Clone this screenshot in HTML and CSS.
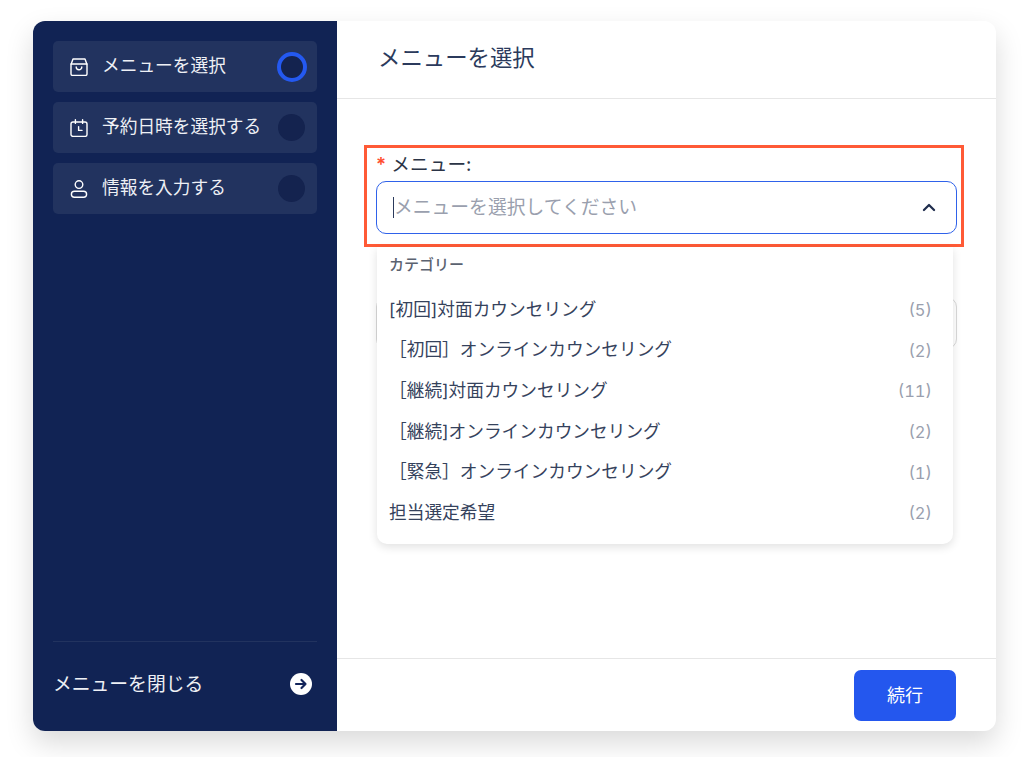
FILE: index.html
```html
<!DOCTYPE html>
<html lang="ja">
<head>
    <meta charset="UTF-8">
    <meta name="viewport" content="width=device-width, initial-scale=1.0">
    <title>メニューを選択</title>
    <link rel="stylesheet" href="styles.css">
</head>
<body>
    <div class="card">
        <aside class="sidebar">
            <div class="steps">
                <div class="step">
                    <svg class="step-icon" viewBox="0 0 18 18" fill="none" stroke="currentColor" stroke-width="1.4" stroke-linejoin="round" stroke-linecap="round">
                        <path d="M3 1h12l2 5.500v9.500a1.400 1.400 0 0 1-1.400 1.400H2.400A1.400 1.400 0 0 1 1 16V6.500z"/>
                        <path d="M1 6h16"/>
                        <path d="M6.200 9c0 3.600 5.600 3.600 5.600 0"/>
                    </svg>
                    <span class="step-label">メニューを選択</span>
                    <span class="step-dot active"></span>
                </div>
                <div class="step">
                    <svg class="step-icon" viewBox="0 0 18 18" fill="none" stroke="currentColor" stroke-width="1.4" stroke-linejoin="round" stroke-linecap="round">
                        <rect x="1" y="3" width="16" height="14.400" rx="2"/>
                        <path d="M5.400 .8v3.600M12.600 .8v3.600"/>
                        <path d="M8.600 7.600v3.800h3.400"/>
                    </svg>
                    <span class="step-label">予約日時を選択する</span>
                    <span class="step-dot"></span>
                </div>
                <div class="step">
                    <svg class="step-icon" viewBox="0 0 18 18" fill="none" stroke="currentColor" stroke-width="1.4" stroke-linejoin="round" stroke-linecap="round">
                        <circle cx="9" cy="4.600" r="3.800"/>
                        <path d="M4.400 11.200h9.200a3 3 0 0 1 0 6H4.400a3 3 0 0 1 0-6z"/>
                    </svg>
                    <span class="step-label">情報を入力する</span>
                    <span class="step-dot"></span>
                </div>
            </div>
            <div class="close-row">
                <span class="close-label">メニューを閉じる</span>
                <svg class="close-icon" viewBox="0 0 22 22">
                    <circle cx="11" cy="11" r="11" fill="#fff"/>
                    <path d="M6 11h9.500M11.500 7l4 4-4 4" fill="none" stroke="#12245a" stroke-width="2.200" stroke-linecap="round" stroke-linejoin="round"/>
                </svg>
            </div>
        </aside>

        <main class="main">
            <header class="main-header">メニューを選択</header>

            <div class="main-body">
                <div class="field-highlight">
                    <label class="field-label"><span class="required">*</span> メニュー:</label>
                    <div class="select open">
                        <span class="cursor"></span>
                        <span class="placeholder">メニューを選択してください</span>
                        <svg class="chevron" viewBox="0 0 12 8" fill="none" stroke="#1f2d4d" stroke-width="2" stroke-linecap="round" stroke-linejoin="round">
                            <path d="M1.500 6.200L6 1.800l4.500 4.400"/>
                        </svg>
                    </div>

                    <div class="dropdown">
                        <div class="dropdown-title">カテゴリー</div>
                        <div class="option"><span class="option-label">[初回]対面カウンセリング</span><span class="count">(5)</span></div>
                        <div class="option"><span class="option-label">［初回］オンラインカウンセリング</span><span class="count">(2)</span></div>
                        <div class="option"><span class="option-label">［継続]対面カウンセリング</span><span class="count">(11)</span></div>
                        <div class="option"><span class="option-label">［継続]オンラインカウンセリング</span><span class="count">(2)</span></div>
                        <div class="option"><span class="option-label">［緊急］オンラインカウンセリング</span><span class="count">(1)</span></div>
                        <div class="option"><span class="option-label">担当選定希望</span><span class="count">(2)</span></div>
                    </div>
                </div>

                <div class="select behind"></div>
            </div>

            <footer class="main-footer">
                <button class="next-btn">続行</button>
            </footer>
        </main>
    </div>
</body>
</html>
```

FILE: styles.css
```css
* {
    box-sizing: border-box;
}

html, body {
    height: 757px;
    overflow: hidden;
}

body {
    margin: 0;
    padding: 21px 28px 26px 33px;
    background: #fff;
    font-family: Inter, "Noto Sans CJK JP", sans-serif;
    color: #2b3a5c;
}

.card {
    display: flex;
    height: 710px;
    background: #fff;
    border-radius: 12px;
    box-shadow: 0 12px 28px rgba(0, 0, 0, 0.15);
}

/* Sidebar */
.sidebar {
    display: flex;
    flex-direction: column;
    width: 304px;
    padding: 20px 20px 0 20px;
    background: #112354;
    border-radius: 12px 0 0 12px;
    color: #fff;
}

.steps {
    display: flex;
    flex-direction: column;
    gap: 10px;
    flex: 1;
}

.step {
    display: flex;
    align-items: center;
    height: 51px;
    padding: 0 12px 0 17px;
    background: #22335f;
    border-radius: 5px;
}

.step-icon {
    width: 18px;
    height: 18px;
    flex-shrink: 0;
    color: #fff;
}

.step-label {
    flex: 1;
    margin-left: 14px;
    padding-bottom: 5px;
    font-size: 17.700px;
    color: #eef0f5;
}

.step-dot {
    width: 27px;
    height: 27px;
    border-radius: 50%;
    background: #14234f;
}

.step-dot.active {
    width: 30px;
    height: 30px;
    margin-right: -2px;
    border: 4.500px solid #2459f0;
}

.close-row {
    display: flex;
    align-items: center;
    justify-content: space-between;
    height: 90px;
    padding: 0 5px 5px 0;
    border-top: 1px solid #22335f;
    color: #eef0f5;
}

.close-label {
    padding-bottom: 4px;
    font-size: 18.800px;
}

.close-icon {
    width: 22px;
    height: 22px;
}

/* Main panel */
.main {
    display: flex;
    flex-direction: column;
    flex: 1;
    min-width: 0;
}

.main-header {
    display: flex;
    align-items: center;
    height: 78px;
    padding: 0 0 7px 41px;
    border-bottom: 1px solid #e6e6e6;
    font-size: 22.400px;
    color: #2b3a5c;
}

.main-body {
    flex: 1;
    padding: 46px 32px 0 27px;
}

.field-highlight {
    position: relative;
    height: 102px;
    padding: 4px 4px 0 9px;
    border: 3px solid #ff5a36;
}

.field-label {
    display: block;
    height: 29px;
    font-size: 18.700px;
    line-height: 26px;
    color: #2b3446;
}

.required {
    font-weight: 600;
    color: #ff4d2e;
}

.select {
    position: relative;
    display: flex;
    align-items: center;
    height: 53px;
    padding: 0 0 0 16px;
    background: #fff;
    border: 1px solid #d9d9d9;
    border-radius: 10px;
}

.select.open {
    border: 1.500px solid #2f62ea;
}

.select.behind {
    width: 581px;
    height: 52px;
    margin: 50px 0 0 12px;
}

.cursor {
    width: 1px;
    height: 21px;
    background: #2b3a5c;
}

.placeholder {
    padding-bottom: 4px;
    font-size: 18.800px;
    color: #9a9fae;
}

.chevron {
    position: absolute;
    top: 21px;
    right: 20px;
    width: 14px;
    height: 9px;
}

/* Dropdown lies over the field behind it */
.dropdown {
    position: absolute;
    top: 99px;
    left: 10px;
    z-index: 2;
    width: 576px;
    height: 297px;
    padding: 0 21px 0 12px;
    background: #fff;
    border-radius: 0 0 10px 10px;
    box-shadow: 0 3px 10px rgba(0, 0, 0, 0.12);
}

.dropdown-title {
    height: 42px;
    padding-top: 6px;
    font-size: 15px;
    font-weight: 500;
    line-height: 24px;
    color: #5b6270;
}

.option {
    display: flex;
    align-items: center;
    justify-content: space-between;
    height: 40.600px;
    color: #35425c;
}

.option-label {
    padding-bottom: 3px;
    font-size: 17.700px;
}

.count {
    padding-top: 2px;
    font-size: 16.500px;
    font-variant-numeric: tabular-nums;
    color: #9a9fae;
}

.main-footer {
    display: flex;
    justify-content: flex-end;
    align-items: center;
    height: 73px;
    padding: 0 40px 0 0;
    border-top: 1px solid #e6e6e6;
}

.next-btn {
    width: 102px;
    height: 51px;
    padding-bottom: 4px;
    border: none;
    border-radius: 7px;
    background: #2457ee;
    color: #fff;
    font-family: inherit;
    font-size: 18px;
}
```
